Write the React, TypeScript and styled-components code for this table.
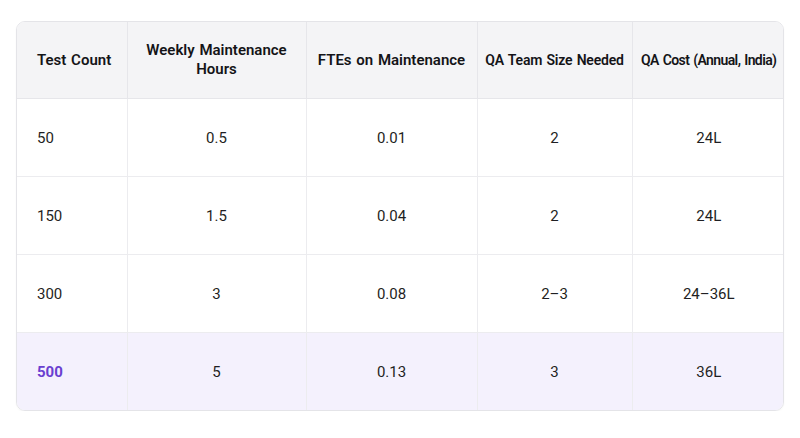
import React from 'react';
import styled, { createGlobalStyle } from 'styled-components';

const GlobalStyle = createGlobalStyle`
  html, body {
    margin: 0;
    padding: 0;
    background: #ffffff;
  }
  body {
    font-family: Roboto, "Liberation Sans", sans-serif;
    color: #1f1f23;
  }
`;

const Page = styled.div`
  padding: 21px 16px 0 16px;
`;

const TableWrap = styled.div`
  border: 1px solid #e4e4e8;
  border-radius: 9px;
  overflow: hidden;
  box-shadow: 0 1px 2px rgba(0, 0, 0, 0.04);
`;

const Table = styled.table`
  width: 100%;
  border-collapse: collapse;
  table-layout: fixed;
`;

const HeadCell = styled.th<{ $left?: boolean; $wrap?: boolean; $size: number; $tracking: number }>`
  background: #f4f4f6;
  height: 76px;
  padding: 0 ${(p) => (p.$wrap ? '16px' : '2px')};
  padding-left: ${(p) => (p.$left ? '20px' : undefined)};
  font-size: ${(p) => p.$size}px;
  font-weight: 600;
  line-height: 19px;
  letter-spacing: ${(p) => p.$tracking}px;
  word-spacing: 1px;
  color: #141418;
  white-space: ${(p) => (p.$wrap ? 'normal' : 'nowrap')};
  text-align: ${(p) => (p.$left ? 'left' : 'center')};
  border-right: 1px solid #e6e6ea;
  border-bottom: 1px solid #e6e6ea;

  &:last-child {
    border-right: none;
  }
`;

const Row = styled.tr<{ $highlight?: boolean }>`
  background: ${(p) => (p.$highlight ? '#f4f1fd' : '#ffffff')};

  &:last-child td {
    border-bottom: none;
  }
`;

const Cell = styled.td<{ $left?: boolean; $accent?: boolean }>`
  height: 77px;
  padding: 0 16px;
  font-size: 15px;
  color: ${(p) => (p.$accent ? '#6a3fd0' : '#1f1f23')};
  font-weight: ${(p) => (p.$accent ? 700 : 400)};
  text-align: ${(p) => (p.$left ? 'left' : 'center')};
  padding-left: ${(p) => (p.$left ? '20px' : '16px')};
  border-right: 1px solid #ececef;
  border-bottom: 1px solid #ececef;

  &:last-child {
    border-right: none;
  }
`;

const columns = [
  { label: 'Test Count', width: 110, wrap: false, size: 15, tracking: 0 },
  { label: 'Weekly Maintenance Hours', width: 179, wrap: true, size: 15, tracking: 0 },
  { label: 'FTEs on Maintenance', width: 171, wrap: false, size: 15, tracking: 0 },
  { label: 'QA Team Size Needed', width: 155, wrap: false, size: 14, tracking: -0.2 },
  { label: 'QA Cost (Annual, India)', width: 153, wrap: false, size: 14, tracking: -0.6 },
];

const rows = [
  ['50', '0.5', '0.01', '2', '24L'],
  ['150', '1.5', '0.04', '2', '24L'],
  ['300', '3', '0.08', '2–3', '24–36L'],
  ['500', '5', '0.13', '3', '36L'],
];

const App: React.FC = () => {
  return (
    <>
      <GlobalStyle />
      <Page>
        <TableWrap>
          <Table>
            <colgroup>
              {columns.map((c) => (
                <col key={c.label} style={{ width: c.width }} />
              ))}
            </colgroup>
            <thead>
              <tr>
                {columns.map((c, i) => (
                  <HeadCell
                    key={c.label}
                    $left={i === 0}
                    $wrap={c.wrap}
                    $size={c.size}
                    $tracking={c.tracking}
                  >
                    {c.label}
                  </HeadCell>
                ))}
              </tr>
            </thead>
            <tbody>
              {rows.map((r, ri) => {
                const highlight = ri === rows.length - 1;
                return (
                  <Row key={r[0]} $highlight={highlight}>
                    {r.map((v, ci) => (
                      <Cell key={ci} $left={ci === 0} $accent={highlight && ci === 0}>
                        {v}
                      </Cell>
                    ))}
                  </Row>
                );
              })}
            </tbody>
          </Table>
        </TableWrap>
      </Page>
    </>
  );
};

export default App;
